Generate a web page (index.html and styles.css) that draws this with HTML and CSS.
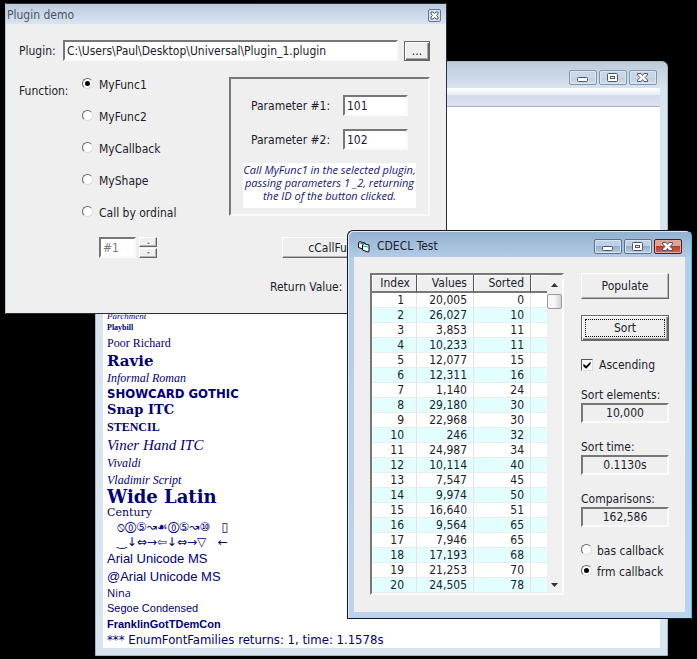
FILE: index.html
```html
<!DOCTYPE html>
<html lang="en">
<head>
<meta charset="utf-8">
<title>Plugin demo</title>
<link rel="stylesheet" href="styles.css">
</head>
<body>
<main class="desktop">

<section class="window fonts-window">
  <header class="titlebar">
    <div class="caption-buttons">
      <button class="caption" aria-label="Minimize"><svg width="12" height="11" viewBox="0 0 12 11"><rect x="0.5" y="5.5" width="10" height="4" rx="1" class="glyph"/></svg></button>
      <button class="caption" aria-label="Maximize"><svg width="12" height="11" viewBox="0 0 12 11"><rect x="0.5" y="1.5" width="10" height="8" rx="1" class="glyph"/><rect x="3.5" y="4.5" width="4" height="2" class="glyph"/></svg></button>
      <button class="caption" aria-label="Close"><svg width="12" height="11" viewBox="0 0 12 11"><path d="M0.5 1.500h3.500l1.500 2 1.500-2h3.500v1.500L8 5.500l2.500 2.500v1.500H7L5.500 7.500 4 9.500H.5V8L3 5.500.5 3z" class="glyph"/></svg></button>
    </div>
  </header>
  <div class="fonts-client">
    <div class="toolbar"></div>
    <div class="font-list">
      <p class="line h12 thin-script">Parchment</p>
      <p class="line h12 playbill">Playbill</p>
      <p class="line h18 poor">Poor Richard</p>
      <p class="line h18 ravie">Ravie</p>
      <p class="line h16 informal">Informal Roman</p>
      <p class="line h16 showcard">SHOWCARD GOTHIC</p>
      <p class="line h16 snap">Snap ITC</p>
      <p class="line h18 stencil">STENCIL</p>
      <p class="line h18 viner">Viner Hand ITC</p>
      <p class="line h18 script">Vivaldi</p>
      <p class="line h16 script">Vladimir Script</p>
      <p class="line h18 wide">Wide Latin</p>
      <p class="line h14 century">Century</p>
      <p class="line h14 symbols">⦸⓪⑤↝☙⓪⑤↝⑩ &nbsp; ▯</p>
      <p class="line h16 symbols">‿↓⇔→⇦↓⇔→▽ &nbsp; ←</p>
      <p class="line h18 arial">Arial Unicode MS</p>
      <p class="line h18 arial">@Arial Unicode MS</p>
      <p class="line h14 nina">Nina</p>
      <p class="line h16 segoe">Segoe Condensed</p>
      <p class="line h16 franklin">FranklinGotTDemCon</p>
      <p class="line h16 summary">*** EnumFontFamilies returns: 1, time: 1.1578s</p>
    </div>
  </div>
</section>

<section class="window plugin-window">
  <header class="tool-title">
    <span>Plugin demo</span>
    <button class="tool-close" aria-label="Close"><svg width="11" height="11" viewBox="0 0 11 11"><path d="M2 2h2l1.500 1.500L7 2h2v2L7.500 5.500 9 7v2H7L5.500 7.500 4 9H2V7l1.500-1.500L2 4z" class="glyph"/></svg></button>
  </header>
  <form class="plugin-body">
    <div class="path-row">
      <label for="path">Plugin:</label>
      <input id="path" class="field path" type="text" value="C:\Users\Paul\Desktop\Universal\Plugin_1.plugin">
      <button type="button" class="push heavy browse">...</button>
    </div>
    <div class="middle">
      <span class="function-label" id="fn">Function:</span>
      <div class="functions" role="radiogroup" aria-labelledby="fn">
        <label class="option"><input type="radio" name="fn" checked><span>MyFunc1</span></label>
        <label class="option"><input type="radio" name="fn"><span>MyFunc2</span></label>
        <label class="option"><input type="radio" name="fn"><span>MyCallback</span></label>
        <label class="option"><input type="radio" name="fn"><span>MyShape</span></label>
        <label class="option"><input type="radio" name="fn"><span>Call by ordinal</span></label>
      </div>
      <div class="params">
        <div class="param"><label for="p1">Parameter #1:</label><input id="p1" class="field" type="text" value="101"></div>
        <div class="param"><label for="p2">Parameter #2:</label><input id="p2" class="field" type="text" value="102"></div>
        <p class="note">Call MyFunc1 in the selected plugin,<br>passing parameters 1 _2, returning<br>the ID of the button clicked.</p>
      </div>
    </div>
    <div class="ordinal-row">
      <input class="field ordinal" type="text" value="#1" aria-label="Ordinal" disabled>
      <div class="spinner">
        <button type="button" class="push" aria-label="Increase" disabled><svg width="5" height="3" viewBox="0 0 5 3"><path d="M1 3l1.500-2L4 3z" fill="#888"/></svg></button>
        <button type="button" class="push" aria-label="Decrease" disabled><svg width="5" height="3" viewBox="0 0 5 3"><path d="M1 0l1.500 2L4 0z" fill="#888"/></svg></button>
      </div>
      <button type="button" class="push call">cCallFunc</button>
    </div>
    <p class="return">Return Value:</p>
  </form>
</section>

<section class="window cdecl-window">
  <header class="titlebar">
    <svg class="app-icon" width="14" height="13" viewBox="0 0 14 13"><path d="M1.500 2.500l1.500-1 2 1 3 .5v6l-1 .5-5.500-2z" fill="#fff" stroke="#000"/><path d="M5.500 5l1.500-1.500 2.500 1L12 5v6.500l-1 .5-5.500-2z" fill="#fff" stroke="#000"/><path d="M2 3l5 1M6 6l5 1" stroke="#0aa" fill="none"/></svg>
    <h1>CDECL Test</h1>
    <div class="caption-buttons">
      <button class="caption" aria-label="Minimize"><svg width="12" height="11" viewBox="0 0 12 11"><rect x="0.5" y="5.5" width="10" height="4" rx="1" class="glyph"/></svg></button>
      <button class="caption" aria-label="Maximize"><svg width="12" height="11" viewBox="0 0 12 11"><rect x="0.5" y="1.5" width="10" height="8" rx="1" class="glyph"/><rect x="3.5" y="4.5" width="4" height="2" class="glyph"/></svg></button>
      <button class="caption close" aria-label="Close"><svg width="12" height="11" viewBox="0 0 12 11"><path d="M0.5 1.500h3.500l1.500 2 1.500-2h3.500v1.500L8 5.500l2.500 2.500v1.500H7L5.500 7.500 4 9.500H.5V8L3 5.500.5 3z" class="glyph"/></svg></button>
    </div>
  </header>
  <form class="cdecl-body">
    <div class="grid-box">
      <table>
        <thead><tr><th class="c1">Index</th><th class="c2">Values</th><th class="c3">Sorted</th><th></th></tr></thead>
        <tbody>
          <tr><td>1</td><td>20,005</td><td>0</td><td></td></tr>
          <tr><td>2</td><td>26,027</td><td>10</td><td></td></tr>
          <tr><td>3</td><td>3,853</td><td>11</td><td></td></tr>
          <tr><td>4</td><td>10,233</td><td>11</td><td></td></tr>
          <tr><td>5</td><td>12,077</td><td>15</td><td></td></tr>
          <tr><td>6</td><td>12,311</td><td>16</td><td></td></tr>
          <tr><td>7</td><td>1,140</td><td>24</td><td></td></tr>
          <tr><td>8</td><td>29,180</td><td>30</td><td></td></tr>
          <tr><td>9</td><td>22,968</td><td>30</td><td></td></tr>
          <tr><td>10</td><td>246</td><td>32</td><td></td></tr>
          <tr><td>11</td><td>24,987</td><td>34</td><td></td></tr>
          <tr><td>12</td><td>10,114</td><td>40</td><td></td></tr>
          <tr><td>13</td><td>7,547</td><td>45</td><td></td></tr>
          <tr><td>14</td><td>9,974</td><td>50</td><td></td></tr>
          <tr><td>15</td><td>16,640</td><td>51</td><td></td></tr>
          <tr><td>16</td><td>9,564</td><td>65</td><td></td></tr>
          <tr><td>17</td><td>7,946</td><td>65</td><td></td></tr>
          <tr><td>18</td><td>17,193</td><td>68</td><td></td></tr>
          <tr><td>19</td><td>21,253</td><td>70</td><td></td></tr>
          <tr><td>20</td><td>24,505</td><td>78</td><td></td></tr>
        </tbody>
      </table>
      <div class="scrollbar">
        <svg width="7" height="4" viewBox="0 0 7 4"><path d="M0 4l3.500-4L7 4z" fill="#333"/></svg>
        <div class="thumb"></div>
        <svg width="7" height="4" viewBox="0 0 7 4"><path d="M0 0l3.500 4L7 0z" fill="#333"/></svg>
      </div>
    </div>
    <div class="side">
      <button type="button" class="push">Populate</button>
      <button type="button" class="push heavy focused">Sort</button>
      <label class="check"><input type="checkbox" checked><span>Ascending</span></label>
      <div class="stats">
        <div class="stat"><label for="n">Sort elements:</label><output id="n">10,000</output></div>
        <div class="stat"><label for="t">Sort time:</label><output id="t">0.1130s</output></div>
        <div class="stat"><label for="c">Comparisons:</label><output id="c">162,586</output></div>
      </div>
      <div class="callbacks">
        <label class="option"><input type="radio" name="cb"><span>bas callback</span></label>
        <label class="option"><input type="radio" name="cb" checked><span>frm callback</span></label>
      </div>
    </div>
  </form>
</section>

</main>
</body>
</html>
```
FILE: styles.css
```css
* { box-sizing: border-box; }
body { margin: 0; background: #000; }
body, button, input {
  font-family: "DejaVu Sans Condensed", "DejaVu Sans", sans-serif;
  font-size: 12px;
  line-height: 16px;
  color: #1c1c2c;
}
p, h1 { margin: 0; font-weight: 400; }
.desktop { position: relative; min-height: 100vh; overflow: hidden; }

/* Windows */
.window { position: absolute; }
.fonts-window {
  left: 95px; top: 61px; width: 573px; height: 595px;
  display: flex; flex-direction: column;
  padding: 0 7px 7px;
  border: 1px solid #a9b5c1;
  border-radius: 6px 6px 0 0;
  background: linear-gradient(#bccbdb, #d9e4f1 28px);
}
.plugin-window {
  left: 5px; top: 3px; width: 442px;
  border: 1px solid #2a2f36;
  border-left-color: #b9c4d2;
  background: #efefef;
}
.cdecl-window {
  left: 347px; top: 230px; width: 345px;
  padding: 0 6px 6px;
  border: 1px solid #101820;
  border-right-color: #35c4e6;
  border-radius: 6px 6px 0 0;
  background: linear-gradient(#92b0cf, #b5cde8 28px, #bcd2ed);
  box-shadow: inset 1px 1px #dfeaf6;
}

/* Title bars */
.titlebar { display: flex; align-items: center; height: 26px; padding-top: 4px; gap: 6px; }
.titlebar h1 { font-size: 12px; }
.app-icon { margin-left: 3px; }
.plugin-window, .cdecl-window { overflow: hidden; }
.caption-buttons { display: flex; gap: 2px; margin-left: auto; padding-right: 3px; }
.caption {
  display: grid; place-items: center;
  width: 28px; height: 15px; padding: 0;
  border: 1px solid #8295ad; border-radius: 2px;
  background: linear-gradient(#c9d7e6 50%, #bccddf 50%, #d3e0ee);
  box-shadow: inset 0 0 0 1px #dbe6f1;
}
.cdecl-window .caption { border-color: #58718f; background: linear-gradient(#bdd1e8 50%, #93afce 50%, #b5cee8); }
.cdecl-window .close { border-color: #521a1a; background: linear-gradient(#dfa096 50%, #b93c26 50%, #d5684d); box-shadow: inset 0 0 0 1px #e5a99d; }
.glyph { fill: #fff; stroke: #4f5566; stroke-width: 1; }
.tool-title {
  display: flex; align-items: center; justify-content: space-between;
  height: 20px; padding: 2px 5px 0 1px;
  background: linear-gradient(#bccbdb, #d8e4f2);
  color: #4c5464;
}
.tool-close {
  display: grid; place-items: center;
  width: 13px; height: 13px; padding: 0;
  border: 1px solid #5f7899; border-radius: 2px; background: #d6e2ef;
}

/* Controls */
.field {
  min-width: 0; height: 21px; padding: 0 2px;
  border: 2px solid; border-color: #777 #fafafa #fafafa #777;
  border-radius: 0; background: #fff; outline: 0;
}
.push {
  display: grid; place-items: center;
  padding: 0; border: 1px solid; border-color: #fff #666 #666 #fff;
  border-radius: 0; background: #efefef;
  box-shadow: inset -1px -1px #b4b4b4;
}
.heavy { border-color: #666; box-shadow: inset 1px 1px #fff, inset -1px -1px #666, inset -2px -2px #aaa; }
.option, .check { display: flex; align-items: center; }
.option input {
  appearance: none; display: grid; place-items: center;
  width: 11px; height: 11px; margin: 0 6px 3px 0;
  border: 1px solid; border-color: #666 #ddd #ddd #666;
  border-radius: 50%; background: #fff;
}
.option input:checked::before { content: ""; width: 5px; height: 5px; border-radius: 50%; background: #000; }
.check input {
  appearance: none; display: grid; place-items: center;
  width: 12px; height: 12px; margin: 0 6px 0 0;
  border: 1px solid; border-color: #555 #ddd #ddd #555; background: #fff;
}
.check input:checked::before {
  content: ""; width: 8px; height: 8px; background: #000;
  clip-path: polygon(5% 35%, 40% 62%, 95% 5%, 95% 38%, 40% 98%, 5% 68%);
}

/* Plugin demo */
.plugin-body { padding: 16px 16px 18px 13px; }
.path-row { display: grid; grid-template-columns: 38px 1fr 26px; gap: 6px; align-items: center; }
.path { width: 100%; }
.browse { height: 20px; }
.middle { display: flex; margin-top: 16px; }
.function-label { width: 63px; padding-top: 6px; }
.functions { display: flex; flex-direction: column; gap: 16px; flex: 1; }
.params {
  width: 201px; height: 139px; padding: 16px 12px 0;
  border: 2px solid; border-color: #777 #fafafa #fafafa #777;
}
.param { display: flex; justify-content: space-between; align-items: center; padding: 0 8px; margin-bottom: 13px; }
.param .field { width: 65px; }
.note {
  height: 45px; background: #fff; color: #14147c;
  font-family: "Open Sans", sans-serif;
  font-size: 11px; line-height: 13px; font-style: italic;
  text-align: center; white-space: nowrap;
}
.ordinal-row { display: flex; align-items: center; margin-top: 16px; padding-left: 80px; }
.ordinal { width: 37px; }
.ordinal:disabled { color: #777; }
.spinner { display: grid; gap: 1px; margin-left: 3px; }
.spinner .push { width: 18px; height: 10px; }
.call { width: 104px; height: 21px; margin-left: 125px; }
.return { margin-top: 21px; padding-left: 251px; }

/* Font list */
.fonts-window .titlebar { flex: none; }
.fonts-client { flex: 1; min-height: 0; display: flex; flex-direction: column; background: #fff; }
.toolbar { height: 19px; flex: none; border-bottom: 1px solid #aab0c8; background: linear-gradient(#fff, #e8ecf6 7px, #d4daec 7px, #dee2f2); }
.font-list { flex: 1; display: flex; flex-direction: column; justify-content: flex-end; padding: 0 4px; color: #000078; }
.line { white-space: pre; }
.h12 { line-height: 12px; }
.h14 { line-height: 14px; }
.h16 { line-height: 16px; }
.h18 { line-height: 18px; }
.thin-script { font: italic 9px/12px "Liberation Serif", serif; }
.playbill { font: bold 8px/12px "Liberation Serif", serif; }
.poor { font-family: "Liberation Serif", serif; }
.ravie { font-family: "DejaVu Serif", serif; font-size: 15px; font-weight: 700; }
.informal { font-family: "Liberation Serif", serif; font-size: 12px; font-style: italic; }
.showcard { font-size: 13px; font-weight: 700; }
.snap { font-family: "DejaVu Serif", serif; font-weight: 700; font-size: 13px; }
.stencil { font-family: "Liberation Serif", serif; font-weight: 700; }
.viner { font-family: "Liberation Serif", serif; font-size: 15px; font-style: italic; }
.script { font-family: "Liberation Serif", serif; font-size: 12px; font-style: italic; }
.wide { font-family: "DejaVu Serif", serif; font-size: 18px; font-weight: 700; }
.century { font-family: "DejaVu Serif", serif; font-size: 11px; }
.symbols { padding-left: 10px; font-family: "DejaVu Sans", sans-serif; font-size: 12px; }
.arial { font-family: "Liberation Sans", sans-serif; font-size: 13px; }
.nina { font-family: "Open Sans", sans-serif; font-size: 11px; }
.segoe { font-family: "Liberation Sans", sans-serif; font-size: 11px; }
.franklin { font-family: "Liberation Sans", sans-serif; font-size: 11px; font-weight: 700; }
.summary { font-family: "DejaVu Sans Condensed", sans-serif; font-size: 13px; }

/* CDECL test */
.cdecl-body { display: flex; justify-content: space-between; padding: 16px 16px 17px; background: #efefef; }
.grid-box { display: flex; width: 194px; border: 2px solid; border-color: #777 #fafafa #fafafa #777; background: #fff; }
table { flex: 1; border-collapse: separate; border-spacing: 0; table-layout: fixed; }
.c1 { width: 45px; }
.c2, .c3 { width: 57px; }
th, td { height: 15px; padding: 1px 6px 0 0; text-align: right; font-weight: 400; line-height: 13px; border-right: 1px solid #e4e4e4; border-bottom: 1px solid #ececec; }
th { height: 18px; background: #efefef; border-right: 1px solid #555; border-bottom: 2px solid #777; box-shadow: inset 1px 1px #fff; }
td:first-child { padding-right: 12px; }
td:last-child, th:last-child { padding: 0; border-right: 0; }
tbody tr:nth-child(even) { background: #e2feff; }
.scrollbar { display: flex; flex-direction: column; align-items: center; width: 15px; padding: 8px 0 6px; background: #f0f0f0; }
.thumb { width: 15px; height: 15px; margin: 7px 0 auto; border: 1px solid #999; border-radius: 2px; background: linear-gradient(90deg, #f6f6f6 50%, #d2d2d6); }
.side { display: flex; flex-direction: column; width: 88px; }
.side .push { height: 26px; }
.focused { position: relative; margin-top: 16px; }
.focused::after { content: ""; position: absolute; inset: 3px; border: 1px dotted #000; }
.check { margin-top: 16px; white-space: nowrap; }
.stats { display: grid; gap: 16px; margin-top: 14px; }
.stat { display: grid; }
.stat label { white-space: nowrap; }
.stat output { height: 20px; border: 2px solid; border-color: #777 #fafafa #fafafa #777; text-align: center; }
.callbacks { display: grid; gap: 5px; margin-top: 16px; white-space: nowrap; }
.callbacks .option input { margin-right: 5px; }
```
